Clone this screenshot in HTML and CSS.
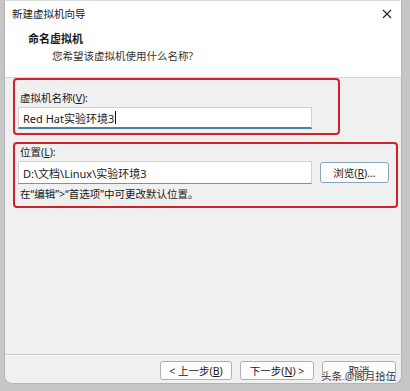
FILE: index.html
```html
<!DOCTYPE html>
<html lang="zh-CN">
<head>
<meta charset="UTF-8">
<meta name="viewport" content="width=device-width, initial-scale=1.0">
<title>新建虚拟机向导</title>
<link rel="stylesheet" href="styles.css">
</head>
<body>
<div class="window">
    <div class="header">
        <div class="titlebar">
            <span class="title">新建虚拟机向导</span>
            <svg class="close" width="10" height="10" viewBox="0 0 10 10">
                <path d="M1 1 L9 9 M9 1 L1 9" stroke="#222" stroke-width="1.1" fill="none"/>
            </svg>
        </div>
        <div class="heading">命名虚拟机</div>
        <div class="subheading">您希望该虚拟机使用什么名称?</div>
    </div>

    <div class="content">
        <div class="box box-name">
            <div class="label">虚拟机名称(<u>V</u>):</div>
            <div class="input input-focus">Red Hat实验环境3<span class="caret"></span></div>
        </div>
        <div class="box box-location">
            <div class="label">位置(<u>L</u>):</div>
            <div class="row">
                <div class="input input-path">D:\文档\Linux\实验环境3</div>
                <button class="btn btn-browse">浏览(<u>R</u>)...</button>
            </div>
            <div class="hint">在“编辑”&gt;“首选项”中可更改默认位置。</div>
        </div>
    </div>

    <div class="footer">
        <button class="btn">&lt; 上一步(<u>B</u>)</button>
        <button class="btn">下一步(<u>N</u>) &gt;</button>
        <button class="btn">取消</button>
    </div>
</div>

<!-- overlay mark stamped on the screenshot -->
<div class="watermark">头条 @阁月拾伍</div>
</body>
</html>
```

FILE: styles.css
```css
body {
    position: relative;
    margin: 0;
    width: 410px;
    height: 391px;
    overflow: hidden;
    background-color: #c6c6c6;
    font-family: "Noto Sans", "Noto Sans CJK SC", sans-serif;
    font-size: 10.5px;
    color: #1a1a1a;
}
.window {
    margin-left: 4px;
    width: 396px;
    height: 382px;
    display: flex;
    flex-direction: column;
    background-color: #f0f0f0;
    border: 1px solid #b4b4b4;
    border-top-color: #dcdcdc;
    border-radius: 0 0 8px 8px;
    overflow: hidden;
}
.header {
    height: 76px;
    background-color: #fff;
    border-bottom: 1px solid #d6d6d6;
}
.titlebar {
    height: 26px;
    display: flex;
    align-items: center;
    padding: 0 9px 0 7px;
}
.title {
    font-size: 10.5px;
    line-height: 14px;
}
.close {
    margin-left: auto;
}
.heading {
    margin: 4px 0 0 23px;
    font-weight: bold;
    font-size: 11px;
    line-height: 16px;
}
.subheading {
    margin: 2px 0 0 47px;
    line-height: 14px;
    color: #333;
}
.content {
    flex: 1;
    display: flex;
    flex-direction: column;
    gap: 7px;
    padding-left: 8px;
}
.box {
    border: 2px solid #cf2329;
    border-radius: 4px;
    box-sizing: border-box;
}
.box-name {
    width: 327px;
    height: 57px;
    padding: 11px 0 0 3px;
}
.box-location {
    width: 385px;
    height: 66px;
    padding: 1px 0 0 3px;
}
.label {
    padding-left: 2px;
    line-height: 14px;
    margin-bottom: 2px;
}
.input {
    width: 294px;
    box-sizing: border-box;
    background-color: #fff;
    border: 1px solid #d2d2d2;
    padding-left: 4px;
    display: flex;
    align-items: center;
    font-size: 11px;
}
.input-focus {
    height: 22px;
    border-bottom: 2px solid #4f7f9e;
}
.caret {
    display: inline-block;
    width: 1px;
    height: 13px;
    margin-left: 1px;
    background-color: #111;
}
.row {
    display: flex;
    align-items: center;
    gap: 8px;
}
.input-path {
    height: 23px;
    border-bottom-color: #8c8c8c;
}
.btn {
    font-family: inherit;
    font-size: 10.5px;
    color: #1a1a1a;
    background-color: #fdfdfd;
    border: 1px solid #b0b0b0;
    border-radius: 3px;
    padding: 0;
    height: 19px;
    width: 74px;
    line-height: 14px;
}
.btn-browse {
    width: 69px;
    height: 21px;
    border-color: #8da4bd;
}
.hint {
    margin-top: 3px;
    padding-left: 2px;
    line-height: 14px;
}
.footer {
    height: 29px;
    display: flex;
    justify-content: flex-end;
    gap: 8px;
    padding: 6px 5px 0 0;
    box-sizing: border-box;
    border-top: 1px solid #c8c8c8;
    box-shadow: inset 0 1px 0 #fafafa;
}
.footer .btn:first-child {
    width: 72px;
}
.watermark {
    position: absolute;
    left: 321px;
    top: 368px;
    font-size: 10.5px;
    line-height: 16px;
    white-space: nowrap;
    color: #3a3a3a;
    text-shadow: 0 0 2px #fff, 0 0 2px #fff;
}
```
